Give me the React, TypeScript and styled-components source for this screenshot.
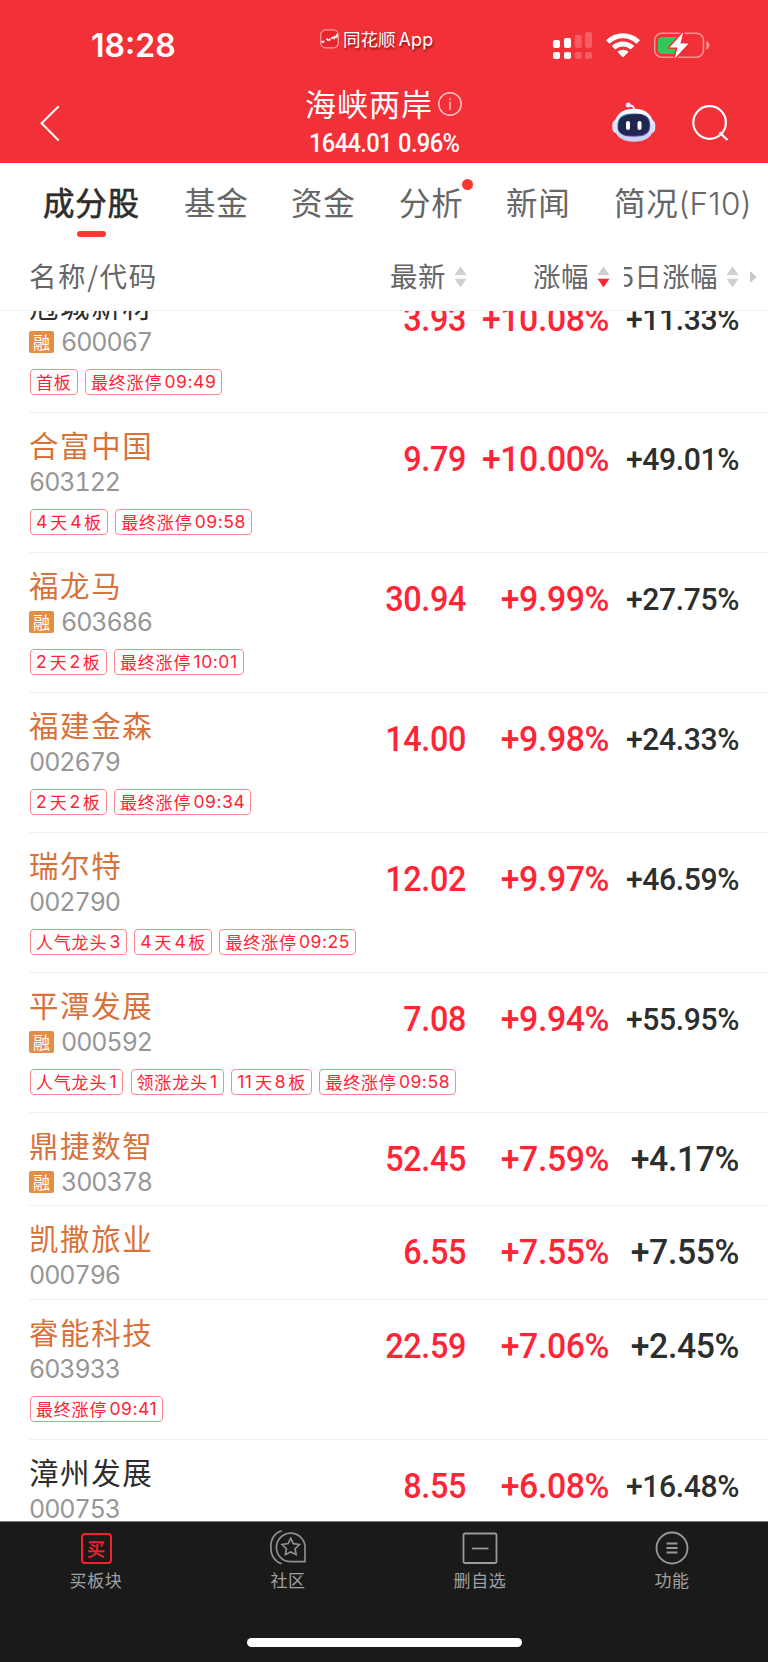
import React from "react";
import styled, { createGlobalStyle } from "styled-components";

const Global = createGlobalStyle`
  * { box-sizing: border-box; }
  html, body { margin: 0; padding: 0; background: #fff; }
  body { width: 768px; height: 1662px; overflow: hidden; font-family: Inter, "Noto Sans CJK SC", sans-serif; }
`;

const CJK = `"Noto Sans CJK SC", sans-serif`;
const NUM = `Roboto, "Liberation Sans", sans-serif`;

const Screen = styled.div`
  width: 768px;
  height: 1662px;
  display: flex;
  flex-direction: column;
  overflow: hidden;
  background: #fff;
`;

const Header = styled.header`
  height: 163px;
  flex: none;
  background: #f23037;
  color: #fff;
`;

const StatusBar = styled.div`
  height: 80px;
  display: grid;
  grid-template-columns: 320px 1fr 215px;
`;

const Clock = styled.div`
  padding: 26px 0 0 91px;
  font: 600 32px/40px Inter, sans-serif;
  letter-spacing: 0;
`;

const AppMark = styled.div`
  display: flex;
  gap: 4px;
  padding-top: 29px;
  height: 50px;
  white-space: nowrap;
`;

const AppName = styled.span`
  font: 400 17.5px/20px ${CJK};
  text-shadow: 1px 2px 2px rgba(90, 0, 0, 0.65);
  span { font-family: Inter, sans-serif; font-size: 18px; margin-left: 3px; letter-spacing: 0.2px; }
`;

const NavBar = styled.div`
  height: 82px;
  display: grid;
  grid-template-columns: 305px 1fr 156px;
`;

const BackSlot = styled.div`
  padding: 24px 0 0 39px;
`;

const TitleBlock = styled.div`
  display: flex;
  flex-direction: column;
`;

const TitleLine = styled.div`
  display: flex;
  align-items: center;
  height: 46px;
  gap: 4px;
`;

const Title = styled.h1`
  margin: 0;
  font: 400 31px/46px ${CJK};
  letter-spacing: 1px;
`;

const Quote = styled.div`
  margin: -1px 0 0 4px;
  font: 500 25.5px/36px ${NUM};
  letter-spacing: -0.7px;
  word-spacing: 1px;
  transform: scaleX(0.93);
  transform-origin: left;
`;

const NavActions = styled.div`
  display: flex;
  gap: 36px;
  padding-top: 22px;
`;

const TabBar = styled.nav`
  height: 82px;
  flex: none;
  display: flex;
  padding-left: 43px;
`;

const Tab = styled.div<{ $active?: boolean; $w: number }>`
  position: relative;
  width: ${(p) => p.$w}px;
  flex: none;
  font: 400 31.5px/46px ${CJK};
  letter-spacing: 0.7px;
  padding-top: 15px;
  color: ${(p) => (p.$active ? "#2d2d2d" : "#666")};
  -webkit-text-stroke: ${(p) => (p.$active ? "0.6px #2d2d2d" : "0")};
  white-space: nowrap;
  span { font-family: Inter, sans-serif; letter-spacing: 0.2px; font-weight: 300; }
`;

const Underline = styled.i`
  position: absolute;
  left: 34px;
  top: 68px;
  width: 29px;
  height: 6px;
  border-radius: 3px;
  background: #fb382f;
`;

const Dot = styled.i`
  position: absolute;
  left: 63px;
  top: 16px;
  width: 11px;
  height: 11px;
  border-radius: 50%;
  background: #fb382f;
`;

const ColumnHead = styled.div`
  height: 66px;
  flex: none;
  display: grid;
  grid-template-columns: 390px 143px 91px 126px 18px;
  align-items: center;
  border-bottom: 1px solid #f0f0f0;
  font: 400 27.5px/40px ${CJK};
  letter-spacing: 0.5px;
  color: #666;
  padding-bottom: 5px;
`;

const HeadCell = styled.div<{ $first?: boolean }>`
  display: flex;
  align-items: center;
  gap: 8px;
  padding-left: ${(p) => (p.$first ? 29 : 0)}px;
  letter-spacing: ${(p) => (p.$first ? 1.6 : 0.4)}px;
  white-space: nowrap;
  svg { margin-top: 4px; flex: none; }
`;

const ClippedLabel = styled.div`
  overflow: hidden;
  display: flex;
  justify-content: flex-end;
  width: 94px;
  flex: none;
`;

const List = styled.main`
  height: 1210px;
  flex: none;
  overflow: hidden;
`;

const Rows = styled.div`
  margin-top: -38px;
`;

const Row = styled.article<{ $tall: boolean }>`
  height: ${(p) => (p.$tall ? 140 : 93.33)}px;
  margin-left: 29px;
  border-bottom: 1px solid #f0f0f0;
  display: grid;
  grid-template-columns: 1fr 141px 143px 130px;
  grid-template-rows: 92px 1fr;
  padding-right: 29px;
`;

const Identity = styled.div`
  padding-top: 9px;
`;

const StockName = styled.div<{ $dark?: boolean }>`
  font: 400 29.5px/44px ${CJK};
  letter-spacing: 1.6px;
  color: ${(p) => (p.$dark ? "#2d2d2d" : "#d9713a")};
`;

const CodeLine = styled.div`
  display: flex;
  align-items: center;
  gap: 7px;
  height: 32px;
`;

const MarginBadge = styled.span`
  width: 25px;
  height: 22px;
  border-radius: 2px;
  background: #e68d45;
  color: #fff;
  font: 400 17px/21px ${CJK};
  text-align: center;
`;

const Code = styled.span`
  font: 400 25px/30px Inter, sans-serif;
  font-variant-numeric: tabular-nums;
  letter-spacing: -1.05px;
  color: #969696;
`;

type FigureKind = "price" | "change" | "week" | "weekSmall";

const squeeze: Record<FigureKind, number> = {
  price: 0.925,
  change: 0.965,
  week: 0.965,
  weekSmall: 0.972,
};

const Figure = styled.div<{ $kind: FigureKind }>`
  text-align: right;
  white-space: nowrap;
  font: 500 ${(p) => (p.$kind === "weekSmall" ? 31 : 35)}px/40px ${NUM};
  letter-spacing: -0.4px;
  color: ${(p) => (p.$kind.startsWith("week") ? "#2d2f2f" : "#ff2436")};
  padding-top: 27px;
  transform: scaleX(${(p) => squeeze[p.$kind]});
  transform-origin: right;
`;

const Tags = styled.div`
  grid-column: 1 / -1;
  display: flex;
  gap: 7.4px;
  padding: 4px 0 0 1px;
`;

const Tag = styled.span`
  height: 26px;
  display: flex;
  align-items: center;
  border: 1px solid #ff8791;
  border-radius: 4px;
  padding: 0 5px;
  color: #ff2436;
  font: 400 17px/24px ${CJK};
  letter-spacing: 0.8px;
  white-space: nowrap;
`;

const digitMargins = { lead: "0 2.5px 0 0", inner: "0 2px 0 2px", tail: "0 0 0 2.3px" };

const TagDigits = styled.span<{ $at: keyof typeof digitMargins }>`
  font: 400 17.5px/24px Inter, sans-serif;
  letter-spacing: 0.55px;
  margin: ${(p) => digitMargins[p.$at]};
`;

const BottomBar = styled.footer`
  flex: 1;
  background: #1a1a1a;
  border-top: 1px solid #777;
  display: flex;
  flex-direction: column;
  align-items: center;
`;

const BottomTabs = styled.div`
  width: 100%;
  height: 116px;
  display: grid;
  grid-template-columns: repeat(4, 192px);
`;

const BottomTab = styled.div`
  display: flex;
  flex-direction: column;
  align-items: center;
  padding-top: 7px;
  font: 400 17px/26px ${CJK};
  letter-spacing: 0.6px;
  color: #a0a0a0;
  svg { margin-bottom: 2px; }
`;

const HomeIndicator = styled.div`
  width: 275px;
  height: 9px;
  border-radius: 5px;
  background: #fff;
`;

const BoxGlyph = styled.span`
  width: 31px;
  height: 31px;
  margin: 4px 0 3px;
  border: 2px solid #f3232e;
  border-radius: 4px;
  color: #f3232e;
  font: 400 18px/26px ${CJK};
  -webkit-text-stroke: 0.5px #f3232e;
  letter-spacing: 0;
  text-align: center;
`;

const AppIcon = () => (
  <svg width="19" height="20" viewBox="0 0 19 20" fill="none">
    <rect x="0.7" y="0.9" width="17.6" height="18" rx="5" fill="#e8262d" stroke="#ff9c9c" strokeWidth="1.2" />
    <path d="M1.500 12.700h3.500M6.500 9.500l2 2.500 2-2.500M11 9.500l2-1 .8.8 3-3v3" stroke="#fff" strokeWidth="1.9" strokeDasharray="2.600 .7" />
  </svg>
);

const StatusIcons = () => (
  <svg width="215" height="80" viewBox="553 0 215 80" fill="#fff">
    <rect x="553" y="40" width="7" height="8" rx="2" />
    <rect x="564" y="38" width="7" height="10" rx="2" />
    <rect x="553" y="52" width="7" height="7" rx="2" />
    <rect x="564" y="52" width="7" height="7" rx="2" />
    <g opacity=".22">
      <rect x="574.7" y="35" width="7" height="13" rx="2" />
      <rect x="585" y="32" width="7" height="16" rx="2" />
      <rect x="574.7" y="52" width="7" height="7" rx="2" />
      <rect x="585" y="52" width="7" height="7" rx="2" />
    </g>
    <path d="M606 40.200a24.500 24.500 0 0 1 34 0l-3.500 3.600a19.400 19.400 0 0 0-27 0z" />
    <path d="M611.700 46a16.400 16.400 0 0 1 22.600 0l-3.600 3.600a11.300 11.300 0 0 0-15.400 0z" />
    <path d="M617.400 51.800a8.300 8.300 0 0 1 11.200 0L623 57.600z" />
    <rect x="654.7" y="33.2" width="48.8" height="24" rx="7" fill="none" stroke="#fff" strokeOpacity=".48" strokeWidth="1.6" />
    <path d="M706.400 41v8.600c4-1.500 4-7.100 0-8.600z" fillOpacity=".5" />
    <path d="M662 37h16v17h-16a4 4 0 0 1-4-4v-9a4 4 0 0 1 4-4z" fill="#33c759" />
    <path d="M683.200 32.200L669.500 47.600h8l-2.800 11L688.600 43.500h-8.200z" stroke="#f23037" strokeWidth="3" paintOrder="stroke" strokeLinejoin="round" />
  </svg>
);

const BackIcon = () => (
  <svg width="22" height="38" viewBox="0 0 22 38" fill="none">
    <path d="M19.700 2.300L2.600 19.300 19.700 36.500" stroke="#fff" strokeWidth="2" />
  </svg>
);

const InfoIcon = () => (
  <svg width="26" height="26" viewBox="0 0 26 26" fill="none" stroke="#fff" strokeOpacity=".72" strokeWidth="1.4">
    <circle cx="13" cy="14" r="11.200" />
    <path d="M13 11.500v8.200M13 8v2" />
  </svg>
);

const RobotIcon = () => (
  <svg width="44" height="42" viewBox="0 0 44 42">
    <defs>
      <linearGradient id="shell" x1="0" y1="0" x2="0" y2="1">
        <stop offset="0" stopColor="#fff" />
        <stop offset="1" stopColor="#c3cdf5" />
      </linearGradient>
      <linearGradient id="visor" x1="0" y1="0" x2="1" y2="1">
        <stop offset="0" stopColor="#38cdf0" />
        <stop offset=".35" stopColor="#29335f" />
        <stop offset="1" stopColor="#9850e8" />
      </linearGradient>
    </defs>
    <path d="M17 3.500c4 0 5 1 5.200 5" fill="none" stroke="#f5eaf2" strokeWidth="1.8" />
    <circle cx="16.200" cy="3" r="2.500" fill="#f2ecf8" />
    <rect x="0.300" y="17.500" width="43" height="14" rx="5" fill="#d9e0fa" />
    <path d="M22 6.700c13 0 19.500 7 19.500 18 0 9-7 15-19.500 15S2.300 33.500 2.300 24.700c0-11 6.700-18 19.700-18z" fill="url(#shell)" />
    <path d="M22 11.500c11 0 16.300 2.800 16.300 12.200 0 8.200-5.200 11-16.300 11S5.500 31.900 5.500 23.700C5.500 14.300 11 11.500 22 11.500z" fill="url(#visor)" />
    <path d="M22 12.500c10 0 15.300 2.500 15.300 11.200 0 7.400-5 10-15.300 10S6.500 31.100 6.500 23.700C6.500 15 12 12.500 22 12.500z" fill="#1f2750" />
    <rect x="14" y="19" width="4" height="9" rx="2" fill="#fff" />
    <rect x="25.500" y="19" width="4" height="9" rx="2" fill="#fff" />
  </svg>
);

const SearchIcon = () => (
  <svg width="38" height="40" viewBox="0 0 38 40" fill="none" stroke="#fff" strokeWidth="2.2">
    <circle cx="17.600" cy="20.500" r="16.300" />
    <path d="M27.500 30.500L35.500 38" />
  </svg>
);

const SortIcon = ({ active }: { active?: boolean }) => (
  <svg width="13" height="22" viewBox="0 0 13 22">
    <path d="M6.500 .5L12.500 9H.5z" fill="#d0d0d0" />
    <path d="M6.500 21.500L12.500 12.700H.5z" fill={active ? "#ff2436" : "#d0d0d0"} />
  </svg>
);

const CommunityIcon = () => (
  <svg width="38" height="36" viewBox="0 0 38 36" fill="none" stroke="#8e8e8e" strokeWidth="1.700">
    <path d="M36 32.700V17.600A14.300 14.300 0 1 0 21.700 32.700z" />
    <path d="M12.700 1.700C4.500 4.500 1.800 11 1.800 18c0 8 3.800 14.300 10.900 16.800" />
    <path d="M21.700 9.300l2.700 5.300 6 .9-4.300 4.200 1 5.900-5.400-2.700-5.300 2.700 1-5.900-4.300-4.200 6-.9z" />
  </svg>
);

const RemoveIcon = () => (
  <svg width="36" height="36" viewBox="0 0 36 36" fill="none" stroke="#9a9a9a" strokeWidth="1.800">
    <rect x="1.500" y="4.500" width="33" height="29.500" rx="1.500" />
    <path d="M10 19.500h16.500" />
  </svg>
);

const MenuIcon = () => (
  <svg width="36" height="36" viewBox="0 0 36 36" fill="none" stroke="#9a9a9a" strokeWidth="1.800">
    <circle cx="18" cy="19" r="15.500" />
    <path d="M12.500 14.500h11M12.500 19h11M12.500 23.500h11" />
  </svg>
);

type Stock = {
  name: string;
  code: string;
  margin?: boolean;
  dark?: boolean;
  price: string;
  change: string;
  week: string;
  tags?: string[];
};

const stocks: Stock[] = [
  { name: "冠城新材", code: "600067", margin: true, dark: true, price: "3.93", change: "+10.08%", week: "+11.33%", tags: ["首板", "最终涨停09:49"] },
  { name: "合富中国", code: "603122", price: "9.79", change: "+10.00%", week: "+49.01%", tags: ["4天4板", "最终涨停09:58"] },
  { name: "福龙马", code: "603686", margin: true, price: "30.94", change: "+9.99%", week: "+27.75%", tags: ["2天2板", "最终涨停10:01"] },
  { name: "福建金森", code: "002679", price: "14.00", change: "+9.98%", week: "+24.33%", tags: ["2天2板", "最终涨停09:34"] },
  { name: "瑞尔特", code: "002790", price: "12.02", change: "+9.97%", week: "+46.59%", tags: ["人气龙头3", "4天4板", "最终涨停09:25"] },
  { name: "平潭发展", code: "000592", margin: true, price: "7.08", change: "+9.94%", week: "+55.95%", tags: ["人气龙头1", "领涨龙头1", "11天8板", "最终涨停09:58"] },
  { name: "鼎捷数智", code: "300378", margin: true, price: "52.45", change: "+7.59%", week: "+4.17%" },
  { name: "凯撒旅业", code: "000796", price: "6.55", change: "+7.55%", week: "+7.55%" },
  { name: "睿能科技", code: "603933", price: "22.59", change: "+7.06%", week: "+2.45%", tags: ["最终涨停09:41"] },
  { name: "漳州发展", code: "000753", dark: true, price: "8.55", change: "+6.08%", week: "+16.48%" },
];

const TagLabel = ({ text }: { text: string }) => (
  <Tag>
    {text
      .split(/([\d:]+)/)
      .filter(Boolean)
      .map((part, i, all) =>
        /\d/.test(part) ? (
          <TagDigits key={i} $at={i === 0 ? "lead" : i < all.length - 1 ? "inner" : "tail"}>
            {part}
          </TagDigits>
        ) : (
          <span key={i}>{part}</span>
        )
      )}
  </Tag>
);

export default function App() {
  return (
    <Screen>
      <Global />
      <Header>
        <StatusBar>
          <Clock>18:28</Clock>
          <AppMark>
            <AppIcon />
            <AppName>同花顺<span>App</span></AppName>
          </AppMark>
          <StatusIcons />
        </StatusBar>
        <NavBar>
          <BackSlot><BackIcon /></BackSlot>
          <TitleBlock>
            <TitleLine>
              <Title>海峡两岸</Title>
              <InfoIcon />
            </TitleLine>
            <Quote>1644.01 0.96%</Quote>
          </TitleBlock>
          <NavActions>
            <RobotIcon />
            <SearchIcon />
          </NavActions>
        </NavBar>
      </Header>
      <TabBar>
        <Tab $active $w={141}>成分股<Underline /></Tab>
        <Tab $w={107}>基金</Tab>
        <Tab $w={108}>资金</Tab>
        <Tab $w={107}>分析<Dot /></Tab>
        <Tab $w={108}>新闻</Tab>
        <Tab $w={150}>简况<span>(F10)</span></Tab>
      </TabBar>
      <ColumnHead>
        <HeadCell $first>名称/代码</HeadCell>
        <HeadCell>最新<SortIcon /></HeadCell>
        <HeadCell>涨幅<SortIcon active /></HeadCell>
        <HeadCell><ClippedLabel>5日涨幅</ClippedLabel><SortIcon /></HeadCell>
        <HeadCell>
          <svg width="7" height="12" viewBox="0 0 7 12"><path d="M0 0L6.500 6 0 12z" fill="#c8c8c8" /></svg>
        </HeadCell>
      </ColumnHead>
      <List>
        <Rows>
          {stocks.map((s) => (
            <Row key={s.code} $tall={!!s.tags}>
              <Identity>
                <StockName $dark={s.dark}>{s.name}</StockName>
                <CodeLine>
                  {s.margin && <MarginBadge>融</MarginBadge>}
                  <Code>{s.code}</Code>
                </CodeLine>
              </Identity>
              <Figure $kind="price">{s.price}</Figure>
              <Figure $kind="change">{s.change}</Figure>
              <Figure $kind={s.week.length > 6 ? "weekSmall" : "week"}>{s.week}</Figure>
              {s.tags && <Tags>{s.tags.map((t) => <TagLabel key={t} text={t} />)}</Tags>}
            </Row>
          ))}
        </Rows>
      </List>
      <BottomBar>
        <BottomTabs>
          <BottomTab><BoxGlyph>买</BoxGlyph>买板块</BottomTab>
          <BottomTab><CommunityIcon />社区</BottomTab>
          <BottomTab><RemoveIcon />删自选</BottomTab>
          <BottomTab><MenuIcon />功能</BottomTab>
        </BottomTabs>
        <HomeIndicator />
      </BottomBar>
    </Screen>
  );
}
